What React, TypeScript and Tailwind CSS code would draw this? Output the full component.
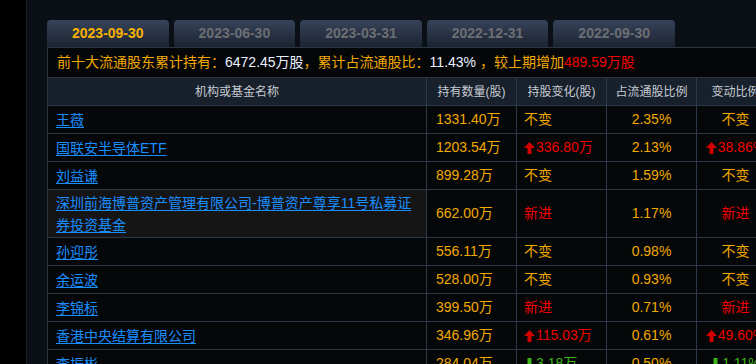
import React from "react";

const FONT = { fontFamily: '"Liberation Sans", "Noto Sans CJK SC", sans-serif' };

function Up({ color = "#d40000" }: { color?: string }) {
  return (
    <svg width="11" height="12" viewBox="0 0 11 12" className="mr-[1px] inline-block shrink-0">
      <path d="M5.5 0 L11 6 L7.5 6 L7.5 12 L3.5 12 L3.5 6 L0 6 Z" fill={color} />
    </svg>
  );
}
function Down({ color = "#3fb31a" }: { color?: string }) {
  return (
    <svg width="11" height="12" viewBox="0 0 11 12" className="mr-[1px] inline-block shrink-0">
      <path d="M3.5 0 L7.5 0 L7.5 6 L11 6 L5.5 12 L0 6 L3.5 6 Z" fill={color} />
    </svg>
  );
}

type Chg = { t: "same" } | { t: "new" } | { t: "up"; v: string } | { t: "down"; v: string };
type Row = { name: string; qty: string; chg: Chg; pct: string; ratio: Chg; tall?: boolean; hl?: boolean };

const rows: Row[] = [
  { name: "王薇", qty: "1331.40万", chg: { t: "same" }, pct: "2.35%", ratio: { t: "same" } },
  { name: "国联安半导体ETF", qty: "1203.54万", chg: { t: "up", v: "336.80万" }, pct: "2.13%", ratio: { t: "up", v: "38.86%" } },
  { name: "刘益谦", qty: "899.28万", chg: { t: "same" }, pct: "1.59%", ratio: { t: "same" } },
  { name: "深圳前海博普资产管理有限公司-博普资产尊享11号私募证券投资基金", qty: "662.00万", chg: { t: "new" }, pct: "1.17%", ratio: { t: "new" }, tall: true, hl: true },
  { name: "孙迎彤", qty: "556.11万", chg: { t: "same" }, pct: "0.98%", ratio: { t: "same" } },
  { name: "余运波", qty: "528.00万", chg: { t: "same" }, pct: "0.93%", ratio: { t: "same" } },
  { name: "李锦标", qty: "399.50万", chg: { t: "new" }, pct: "0.71%", ratio: { t: "new" } },
  { name: "香港中央结算有限公司", qty: "346.96万", chg: { t: "up", v: "115.03万" }, pct: "0.61%", ratio: { t: "up", v: "49.60%" } },
  { name: "李振彬", qty: "284.04万", chg: { t: "down", v: "3.18万" }, pct: "0.50%", ratio: { t: "down", v: "1.11%" } },
];

function ChgView({ c }: { c: Chg }) {
  if (c.t === "same") return <span className="text-[#f2a900]">不变</span>;
  if (c.t === "new") return <span className="text-[#f00000]">新进</span>;
  if (c.t === "up")
    return (
      <span className="inline-flex items-center text-[#f00000]">
        <Up />
        {c.v}
      </span>
    );
  return (
    <span className="inline-flex items-center text-[#3fb31a]">
      <Down />
      {c.v}
    </span>
  );
}

const tabs = ["2023-09-30", "2023-06-30", "2023-03-31", "2022-12-31", "2022-09-30"];

export default function App() {
  return (
    <div className="flex h-[364px] w-[756px] overflow-hidden bg-black" style={FONT}>
      <div className="w-[26px] shrink-0 bg-black" />
      <div className="min-w-0 flex-1 overflow-hidden border-l border-[#1a2029] bg-[#0b0f16] pl-[20px] pt-[20px]">
        <div className="flex h-[27px] gap-[5px]">
          {tabs.map((t, i) => (
            <div
              key={t}
              className={`flex w-[121.6px] shrink-0 items-center justify-center rounded-t-[4px] bg-gradient-to-b from-[#36435a] to-[#1c2431] text-[14px] font-bold ${
                i === 0 ? "text-[#f7b200]" : "text-[#6b6e73]"
              }`}
            >
              {t}
            </div>
          ))}
        </div>
        <div className="w-[800px] border-l border-t border-[#2b3543]">
          <div className="flex h-[30px] items-center border-b border-[#2b3543] bg-[#050608] pl-[9px] text-[14px] text-[#f2a900] whitespace-nowrap">
            <span>前十大流通股东累计持有：</span>
            <span className="text-[#e8f1ff]">6472.45万股</span>
            <span>，累计占流通股比：</span>
            <span className="text-[#e8f1ff]">11.43%</span>
            <span>&nbsp;，较上期增加</span>
            <span className="text-[#f00000]">489.59万股</span>
          </div>
          <div className="grid h-[28px] grid-cols-[379px_90px_90px_90px_78px] border-b border-[#2d3849] bg-[#18202b] text-[12px] text-[#c6cbd3]">
            {["机构或基金名称", "持有数量(股)", "持股变化(股)", "占流通股比例", "变动比例"].map((h) => (
              <div key={h} className="flex items-center justify-center whitespace-nowrap border-r border-[#2d3849]">
                {h}
              </div>
            ))}
          </div>
          {rows.map((r, i) => (
            <div
              key={i}
              className={`grid grid-cols-[379px_90px_90px_90px_78px] border-b border-[#2d3849] bg-[#050708] text-[14px] ${
                r.tall ? "h-[48px]" : "h-[28px]"
              }`}
            >
              <div className={`flex items-center border-r border-[#2d3849] pl-[8px] pr-[6px] ${r.hl ? "bg-[#151515]" : ""}`}>
                <span className="leading-[22px] text-[#1a8dff] underline underline-offset-[2px]">{r.name}</span>
              </div>
              <div className="flex items-center border-r border-[#2d3849] pl-[9px] text-[#f2a900]">{r.qty}</div>
              <div className="flex items-center border-r border-[#2d3849] pl-[7px]">
                <ChgView c={r.chg} />
              </div>
              <div className="flex items-center justify-center border-r border-[#2d3849] text-[#f2a900]">{r.pct}</div>
              <div className="flex items-center justify-center whitespace-nowrap border-r border-[#2d3849]">
                <ChgView c={r.ratio} />
              </div>
            </div>
          ))}
        </div>
      </div>
    </div>
  );
}
